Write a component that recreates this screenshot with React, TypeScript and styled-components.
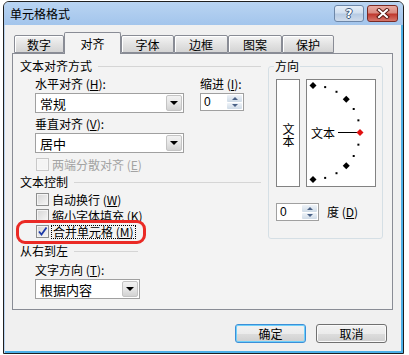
import React from 'react';
import styled, { createGlobalStyle } from 'styled-components';

// --- Global ---
const GlobalStyle = createGlobalStyle`
  html, body {
    margin: 0;
    padding: 0;
    background: #fff;
  }
  body {
    font-family: 'Noto Sans CJK SC', 'Noto Sans', sans-serif;
    font-size: 12px;
    color: #000;
  }
  u { text-decoration: underline; }
`;

const PANEL_BG = '#f3f3f3';

// --- Window frame ---
const Window = styled.div`
  margin: 1px 0 0 3px;
  width: 401px;
  height: 353px;
  box-sizing: border-box;
  border: 1px solid #1f1f1f;
  border-radius: 6px 6px 0 0;
  background: #f0f0f0;
  box-shadow: inset 1px 0 0 #b9d3ef, inset -2px -2px 0 #4cb0e8;
  display: flex;
  flex-direction: column;
  overflow: hidden;
`;

const TitleBar = styled.div`
  height: 23px;
  flex: none;
  display: flex;
  align-items: flex-start;
  padding: 0 5px 0 6px;
  background: linear-gradient(#b9d4f2, #a3c5ec);
`;

const Title = styled.div`
  flex: 1;
  line-height: 23px;
  font-size: 12px;
  color: #000;
`;

const CaptionButtons = styled.div`
  display: flex;
  gap: 3px;
  margin-top: 3px;
`;

const CaptionButton = styled.div<{ $close?: boolean }>`
  width: ${p => (p.$close ? 31 : 30)}px;
  height: 17px;
  box-sizing: border-box;
  border: 1px solid ${p => (p.$close ? '#7a2a24' : '#6d87a8')};
  border-radius: 3px;
  display: flex;
  align-items: center;
  justify-content: center;
  background: ${p =>
    p.$close
      ? 'linear-gradient(#e8aba3 0%, #d98a80 45%, #c0392f 55%, #d6766b 100%)'
      : 'linear-gradient(#e6eef8 0%, #d2e0f0 45%, #b7cbe3 55%, #cfdcec 100%)'};
`;

const HelpMark = styled.span`
  font-family: 'DejaVu Sans', sans-serif;
  font-weight: bold;
  font-size: 12px;
  color: #fff;
  text-shadow: -1px 0 #3d5779, 1px 0 #3d5779, 0 -1px #3d5779, 0 1px #3d5779;
`;

// --- Dialog body ---
const Body = styled.div`
  flex: 1;
  padding: 7px 10px 0 8px;
  display: flex;
  flex-direction: column;
`;

const TabRow = styled.div`
  display: flex;
  align-items: flex-end;
  height: 22px;
  margin: 0 0 -1px 2px;
  position: relative;
  z-index: 1;
`;

const Tab = styled.div<{ $active?: boolean; $w: number }>`
  width: ${p => p.$w}px;
  height: ${p => (p.$active ? 22 : 18)}px;
  margin-bottom: ${p => (p.$active ? 0 : 1)}px;
  box-sizing: border-box;
  border: 1px solid #898c95;
  border-bottom: ${p => (p.$active ? 'none' : '1px solid #898c95')};
  border-radius: 2px 2px 0 0;
  background: ${p => (p.$active ? PANEL_BG : 'linear-gradient(#f4f4f4, #e3e3e3 50%, #d4d4d4)')};
  box-shadow: ${p => (p.$active ? 'none' : 'inset 1px 1px 0 #fff')};
  display: flex;
  align-items: center;
  justify-content: center;
  line-height: 14px;
  padding-top: ${p => (p.$active ? 0 : 1)}px;
`;

const Panel = styled.div`
  height: 257px;
  box-sizing: border-box;
  border: 1px solid #898c95;
  background: ${PANEL_BG};
  display: flex;
  gap: 7px;
  padding: 5px 8px 0 7px;
`;

const LeftColumn = styled.div`
  width: 241px;
  padding-top: 1px;
  display: flex;
  flex-direction: column;
`;

const SectionHeader = styled.div<{ $width?: number; $mt?: number }>`
  display: flex;
  align-items: center;
  height: 12px;
  line-height: 12px;
  width: ${p => (p.$width ? `${p.$width}px` : 'auto')};
  margin-top: ${p => p.$mt ?? 0}px;
  &::after {
    content: '';
    flex: 1;
    height: 1px;
    margin-left: 6px;
    background: #d5d5d5;
  }
`;

const Indent = styled.div<{ $mt?: number }>`
  margin-left: 15px;
  margin-top: ${p => p.$mt ?? 0}px;
`;

const FieldRow = styled.div`
  display: flex;
  gap: 16px;
`;

const Field = styled.div<{ $mt?: number }>`
  display: flex;
  flex-direction: column;
  gap: 3px;
  margin-top: ${p => p.$mt ?? 0}px;
`;

const Label = styled.div<{ $disabled?: boolean }>`
  height: 12px;
  line-height: 12px;
  white-space: nowrap;
  color: ${p => (p.$disabled ? '#a3a3a3' : '#000')};
`;

const Combo = styled.div<{ $w: number }>`
  width: ${p => p.$w}px;
  height: 20px;
  box-sizing: border-box;
  border: 1px solid #a0a0a0;
  background: #fff;
  display: flex;
  align-items: center;
  padding: 0 1px 0 4px;
`;

const ComboText = styled.span`
  flex: 1;
  font-size: 13px;
`;

const DropButton = styled.div`
  width: 16px;
  height: 16px;
  box-sizing: border-box;
  border: 1px solid #c4c4c4;
  border-radius: 2px;
  background: linear-gradient(#f2f2f2, #e6e6e6 50%, #d2d2d2);
  display: flex;
  align-items: center;
  justify-content: center;
  &::after {
    content: '';
    border-left: 4px solid transparent;
    border-right: 4px solid transparent;
    border-top: 4px solid #000;
  }
`;

const Spinner = styled.div<{ $w: number }>`
  width: ${p => p.$w}px;
  height: 18px;
  box-sizing: border-box;
  border: 1px solid #a0a0a0;
  background: #fff;
  display: flex;
  align-items: stretch;
  padding: 1px 1px 1px 3px;
`;

const SpinValue = styled.span`
  flex: 1;
  line-height: 14px;
  font-family: 'Liberation Sans', sans-serif;
  font-size: 12px;
`;

const SpinArrows = styled.div`
  width: 15px;
  display: flex;
  flex-direction: column;
  gap: 1px;
`;

const SpinHalf = styled.div<{ $down?: boolean }>`
  flex: 1;
  border-radius: 1px;
  background: linear-gradient(#eef3f8, #cfdbe7);
  display: flex;
  align-items: center;
  justify-content: center;
  &::after {
    content: '';
    border-left: 3px solid transparent;
    border-right: 3px solid transparent;
    ${p => (p.$down ? 'border-top: 3px solid #4a6287;' : 'border-bottom: 3px solid #4a6287;')}
  }
`;

const CheckRow = styled.div<{ $mt?: number }>`
  position: relative;
  display: flex;
  align-items: center;
  gap: 3px;
  height: 13px;
  margin-left: 16px;
  margin-top: ${p => p.$mt ?? 0}px;
`;

const CheckBox = styled.div<{ $disabled?: boolean }>`
  width: 13px;
  height: 13px;
  box-sizing: border-box;
  border: 1px solid ${p => (p.$disabled ? '#c8c8c8' : '#8e8f8f')};
  background: ${p =>
    p.$disabled ? '#f4f4f4' : 'linear-gradient(135deg, #d5d5d5, #f7f7f7)'};
  box-shadow: inset 0 0 0 1px ${p => (p.$disabled ? '#f7f7f7' : '#f4f4f4')};
  display: flex;
  align-items: center;
  justify-content: center;
`;

const FocusLabel = styled.div`
  height: 12px;
  line-height: 12px;
  outline: 1px dotted #000;
  outline-offset: 0px;
  padding: 0 1px;
`;

const Highlight = styled.div`
  position: absolute;
  left: -20px;
  top: -5px;
  width: 130px;
  height: 24px;
  box-sizing: border-box;
  border: 3px solid #ea2a25;
  border-radius: 9px;
  pointer-events: none;
`;

// --- Orientation group ---
const GroupBox = styled.fieldset`
  margin: 0;
  width: 115px;
  height: 180px;
  box-sizing: border-box;
  border: 1px solid #d5dfe5;
  border-radius: 3px;
  padding: 6px 0 0 7px;
`;

const GroupLegend = styled.legend`
  padding: 0 1px;
  margin-left: -2px;
  line-height: 14px;
  font-size: 12px;
`;

const OrientRow = styled.div`
  display: flex;
  gap: 6px;
`;

const VerticalBox = styled.div`
  width: 24px;
  height: 108px;
  box-sizing: border-box;
  border: 1px solid #828282;
  background: #fff;
  display: flex;
  align-items: center;
  justify-content: center;
  padding-top: 3px;
`;

const VerticalText = styled.span`
  writing-mode: vertical-rl;
  text-orientation: upright;
  font-size: 12px;
  line-height: 14px;
`;

const DialBox = styled.div`
  width: 70px;
  height: 108px;
  box-sizing: border-box;
  border: 1px solid #828282;
  background: #fff;
`;

const DegreeRow = styled.div`
  display: flex;
  align-items: center;
  gap: 8px;
  margin-top: 16px;
`;

// --- Bottom buttons ---
const ButtonRow = styled.div`
  display: flex;
  justify-content: flex-end;
  gap: 10px;
  margin-top: 14px;
  padding-right: 6px;
`;

const PushButton = styled.div<{ $default?: boolean }>`
  width: 71px;
  height: 19px;
  box-sizing: border-box;
  border: 1px solid ${p => (p.$default ? '#3c8fd8' : '#707070')};
  border-radius: 3px;
  background: linear-gradient(#f2f2f2 0%, #ebebeb 50%, #dddddd 51%, #cfcfcf 100%);
  box-shadow: ${p => (p.$default ? 'inset 0 0 0 1px #6fd0fa' : 'inset 0 0 0 1px #fafafa')};
  display: flex;
  align-items: center;
  justify-content: center;
  line-height: 12px;
`;

// --- Drawings ---
const CloseGlyph = () => (
  <svg width="14" height="11" viewBox="0 0 14 11">
    <path d="M3 2 L11 9 M11 2 L3 9" stroke="#5a1a14" strokeWidth="4" strokeLinecap="square" />
    <path d="M3 2 L11 9 M11 2 L3 9" stroke="#fff" strokeWidth="2" strokeLinecap="square" />
  </svg>
);

const Tick = () => (
  <svg width="11" height="11" viewBox="0 0 11 11">
    <path d="M2 5.5 L4.5 8.5 L9.5 1.5" fill="none" stroke="#1c3aa8" strokeWidth="1.8" />
  </svg>
);

const Dial = () => {
  const cx = 6;
  const cy = 52.5;
  const r = 47;
  const marks = [];
  for (let a = 90; a >= -90; a -= 15) {
    const rad = (a * Math.PI) / 180;
    const x = cx + r * Math.cos(rad);
    const y = cy - r * Math.sin(rad);
    if (a % 45 === 0) {
      const s = 3.5;
      marks.push(
        <polygon
          key={a}
          points={`${x},${y - s} ${x + s},${y} ${x},${y + s} ${x - s},${y}`}
          fill={a === 0 ? '#e01010' : '#000'}
        />
      );
    } else {
      marks.push(<rect key={a} x={x - 1} y={y - 1} width="2" height="2" fill="#000" />);
    }
  }
  return (
    <svg width="68" height="106" viewBox="0 0 68 106">
      <text x="4" y="58" fontSize="12" fontFamily="'Noto Sans CJK SC', sans-serif">
        文本
      </text>
      <line x1="31" y1="52.5" x2="50" y2="52.5" stroke="#000" strokeWidth="1" />
      {marks}
    </svg>
  );
};

const tabs = [
  { name: '数字', w: 50 },
  { name: '对齐', w: 57, active: true },
  { name: '字体', w: 53 },
  { name: '边框', w: 54 },
  { name: '图案', w: 54 },
  { name: '保护', w: 52 },
];

export default function App() {
  return (
    <>
      <GlobalStyle />
      <Window>
        <TitleBar>
          <Title>单元格格式</Title>
          <CaptionButtons>
            <CaptionButton>
              <HelpMark>?</HelpMark>
            </CaptionButton>
            <CaptionButton $close>
              <CloseGlyph />
            </CaptionButton>
          </CaptionButtons>
        </TitleBar>

        <Body>
          <TabRow>
            {tabs.map(t => (
              <Tab key={t.name} $w={t.w} $active={t.active}>
                {t.name}
              </Tab>
            ))}
          </TabRow>

          <Panel>
            <LeftColumn>
              <SectionHeader>文本对齐方式</SectionHeader>
              <Indent $mt={6}>
                <FieldRow>
                  <Field>
                    <Label>水平对齐 (<u>H</u>):</Label>
                    <Combo $w={149}>
                      <ComboText>常规</ComboText>
                      <DropButton />
                    </Combo>
                  </Field>
                  <Field>
                    <Label>缩进 (<u>I</u>):</Label>
                    <Spinner $w={44}>
                      <SpinValue>0</SpinValue>
                      <SpinArrows>
                        <SpinHalf />
                        <SpinHalf $down />
                      </SpinArrows>
                    </Spinner>
                  </Field>
                </FieldRow>
                <Field $mt={5}>
                  <Label>垂直对齐 (<u>V</u>):</Label>
                  <Combo $w={149}>
                    <ComboText>居中</ComboText>
                    <DropButton />
                  </Combo>
                </Field>
              </Indent>
              <CheckRow $mt={5}>
                <CheckBox $disabled />
                <Label $disabled>两端分散对齐 (<u>E</u>)</Label>
              </CheckRow>

              <SectionHeader $mt={5}>文本控制</SectionHeader>
              <CheckRow $mt={5}>
                <CheckBox />
                <Label>自动换行 (<u>W</u>)</Label>
              </CheckRow>
              <CheckRow $mt={3}>
                <CheckBox />
                <Label>缩小字体填充 (<u>K</u>)</Label>
              </CheckRow>
              <CheckRow $mt={3}>
                <CheckBox>
                  <Tick />
                </CheckBox>
                <FocusLabel>合并单元格 (<u>M</u>)</FocusLabel>
                <Highlight />
              </CheckRow>

              <SectionHeader $mt={7} $width={118}>从右到左</SectionHeader>
              <Indent $mt={7}>
                <Field>
                  <Label>文字方向 (<u>T</u>):</Label>
                  <Combo $w={105}>
                    <ComboText>根据内容</ComboText>
                    <DropButton />
                  </Combo>
                </Field>
              </Indent>
            </LeftColumn>

            <GroupBox>
              <GroupLegend>方向</GroupLegend>
              <OrientRow>
                <VerticalBox>
                  <VerticalText>文本</VerticalText>
                </VerticalBox>
                <DialBox>
                  <Dial />
                </DialBox>
              </OrientRow>
              <DegreeRow>
                <Spinner $w={43}>
                  <SpinValue>0</SpinValue>
                  <SpinArrows>
                    <SpinHalf />
                    <SpinHalf $down />
                  </SpinArrows>
                </Spinner>
                <Label>度 (<u>D</u>)</Label>
              </DegreeRow>
            </GroupBox>
          </Panel>

          <ButtonRow>
            <PushButton $default>确定</PushButton>
            <PushButton>取消</PushButton>
          </ButtonRow>
        </Body>
      </Window>
    </>
  );
}
